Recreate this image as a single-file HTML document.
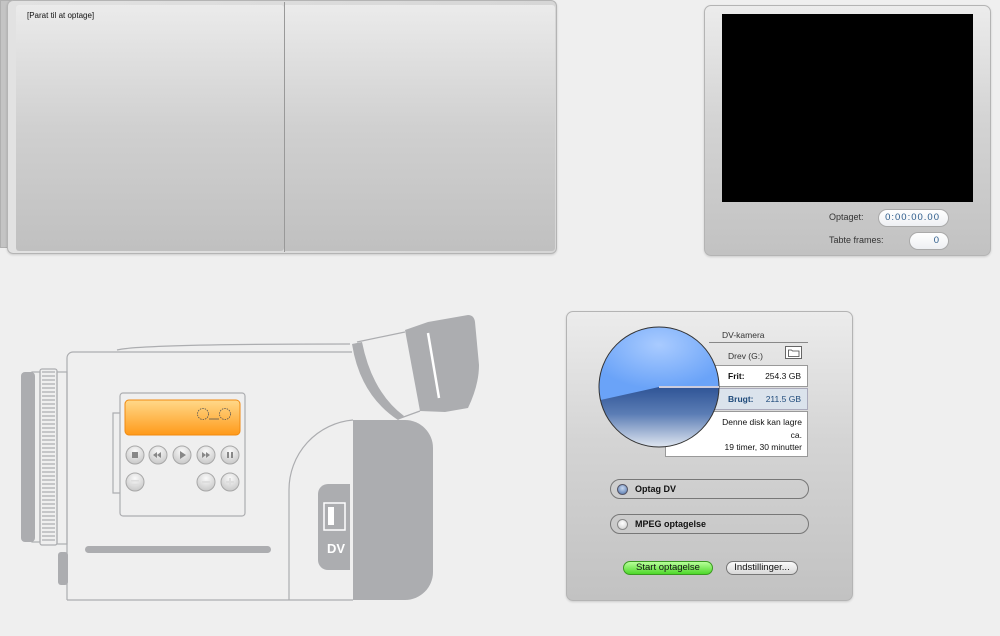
<!DOCTYPE html>
<html><head><meta charset="utf-8"><style>
*{margin:0;padding:0;box-sizing:border-box}
body{width:1000px;height:636px;overflow:hidden;background:#efefef;font-family:"Liberation Sans",sans-serif;position:relative}
.abs{position:absolute}
.panel{border:1px solid #b4b4b4;border-radius:7px;background:linear-gradient(#ececec,#d4d4d4 45%,#c2c2c2);box-shadow:0 1px 2px rgba(0,0,0,.15)}
.lbl{font-size:9px;color:#333}
.pill{position:absolute;background:linear-gradient(#fff,#eef0f3);border:1px solid #aaa;border-radius:10px;font-size:9.5px;color:#2a5a8a;text-align:right;padding-right:8px;letter-spacing:1px}
.radio{position:absolute;left:610px;width:199px;height:20px;border:1px solid #777;border-radius:10px;font-size:9px;font-weight:bold;color:#111;padding-left:24px;line-height:18px}
.radio i{position:absolute;left:6px;top:4px;width:11px;height:11px;border-radius:50%}
.btn{position:absolute;height:14px;border-radius:7px;font-size:9.5px;text-align:center;line-height:12px;color:#111}
</style></head><body>

<div class="abs" style="left:0;top:0;width:12px;height:248px;background:#c4c4c4;border:1px solid #b0b0b0"></div>
<div class="abs panel" style="left:7px;top:0;width:550px;height:254px;border-radius:6px;background:linear-gradient(90deg,#e2e2e2,#d6d6d6)"></div>
<div class="abs" style="left:16px;top:5px;width:268px;height:246px;background:linear-gradient(#ebebeb,#d0d0d0 50%,#c0c0c0);border-radius:3px"></div>
<div class="abs" style="left:284px;top:2px;width:1px;height:250px;background:#999"></div>
<div class="abs" style="left:285px;top:5px;width:270px;height:246px;background:linear-gradient(#ebebeb,#d0d0d0 50%,#c0c0c0);border-radius:0 3px 3px 0"></div>
<div class="abs lbl" style="left:27px;top:11px;font-size:8px;color:#111">[Parat til at optage]</div>

<div class="abs panel" style="left:704px;top:5px;width:287px;height:251px"></div>
<div class="abs" style="left:722px;top:14px;width:251px;height:188px;background:#000"></div>
<div class="abs lbl" style="left:829px;top:212px">Optaget:</div>
<div class="pill" style="left:878px;top:209px;width:71px;height:18px;line-height:16px">0:00:00.00</div>
<div class="abs lbl" style="left:829px;top:235px">Tabte frames:</div>
<div class="pill" style="left:909px;top:232px;width:40px;height:18px;line-height:16px">0</div>

<svg class="abs" style="left:0;top:300px" width="500" height="320" viewBox="0 300 500 320">
 <g fill="#acadb0">
  <rect x="21" y="372" width="14" height="170" rx="4"/>
  <rect x="58" y="552" width="10" height="33" rx="3"/>
  <rect x="85" y="546" width="186" height="7" rx="3.5"/>
  <path d="M353 420 H405 a28 28 0 0 1 28 28 V572 a28 28 0 0 1 -28 28 H353Z"/>
  <path d="M350 484 H328 a10 10 0 0 0 -10 10 V560 a10 10 0 0 0 10 10 H350Z"/>
  <path d="M405 330 L428 322 L468 315 Q474 315 475 322 L479 365 Q479 385 468 408 L445 412 L420 411 Z"/>
  <path d="M352 344 Q360 395 398 420 L404 416 Q372 392 362 342Z"/>
 </g>
 <g fill="none" stroke="#acadb0" stroke-width="1.2">
  <rect x="32" y="372" width="8" height="170"/>
  <rect x="40" y="369" width="17" height="176" rx="2"/>
  <rect x="57" y="372" width="10" height="172"/>
  <path d="M67 600 V358 a6 6 0 0 1 6 -6 H352"/>
  <path d="M117 350 Q140 344 350 344"/>
  <path d="M67 600 H353"/>
  <path d="M289 600 V490 a70 70 0 0 1 64 -70"/>
  <path d="M357 342 L405 332 M398 419 L420 411"/>
  <rect x="120" y="393" width="125" height="123" rx="3"/>
  <path d="M120 413 H113 V493 H120"/>
 </g>
 <g stroke="#acadb0" stroke-width="1.3">
  <path d="M42 372 H55 M42 376 H55 M42 380 H55 M42 384 H55 M42 388 H55 M42 392 H55 M42 396 H55 M42 400 H55 M42 404 H55 M42 408 H55 M42 412 H55 M42 416 H55 M42 420 H55 M42 424 H55 M42 428 H55 M42 432 H55 M42 436 H55 M42 440 H55 M42 444 H55 M42 448 H55 M42 452 H55 M42 456 H55 M42 460 H55 M42 464 H55 M42 468 H55 M42 472 H55 M42 476 H55 M42 480 H55 M42 484 H55 M42 488 H55 M42 492 H55 M42 496 H55 M42 500 H55 M42 504 H55 M42 508 H55 M42 512 H55 M42 516 H55 M42 520 H55 M42 524 H55 M42 528 H55 M42 532 H55 M42 536 H55 M42 540 H55"/>
 </g>
 <path d="M428 333 L439 398" stroke="#fff" stroke-width="2.5"/>
 <defs><linearGradient id="or" x1="0" y1="0" x2="0" y2="1"><stop offset="0" stop-color="#ffd98a"/><stop offset="1" stop-color="#ff9a1a"/></linearGradient>
 <radialGradient id="bt" cx=".5" cy=".3" r=".7"><stop offset="0" stop-color="#fafafa"/><stop offset="1" stop-color="#c8c8c8"/></radialGradient></defs>
 <rect x="125" y="400" width="115" height="35" rx="4" fill="url(#or)" stroke="#f08a10"/>
 <g fill="none" stroke="#555" stroke-width=".8" stroke-dasharray="1.5 1">
  <circle cx="203" cy="414" r="5.5"/><circle cx="225" cy="414" r="5.5"/></g>
 <path d="M209 419 H219" stroke="#555" stroke-width=".8"/>
 <g fill="url(#bt)" stroke="#a8a8a8">
  <circle cx="135" cy="455" r="9"/><circle cx="158" cy="455" r="9"/><circle cx="182" cy="455" r="9"/><circle cx="206" cy="455" r="9"/><circle cx="230" cy="455" r="9"/>
  <circle cx="135" cy="482" r="9"/><circle cx="206" cy="482" r="9"/><circle cx="230" cy="482" r="9"/>
 </g>
 <g fill="#888">
  <rect x="132" y="452" width="6" height="6"/>
  <path d="M153 455 l4 -3 v6z M157 455 l4 -3 v6z"/>
  <path d="M180 451 l6 4 l-6 4z"/>
  <path d="M202 452 l4 3 l-4 3z M206 452 l4 3 l-4 3z"/>
  <rect x="227" y="452" width="2" height="6"/><rect x="231" y="452" width="2" height="6"/>
 </g>
 <g fill="#ddd"><rect x="131" y="480" width="8" height="1.5"/><rect x="131" y="484" width="8" height="1.5"/><rect x="202" y="481" width="8" height="2"/><rect x="226" y="481" width="8" height="2"/><rect x="229" y="478" width="2" height="8"/></g>
 <rect x="324" y="503" width="21" height="27" fill="none" stroke="#fff" stroke-width="1.5"/>
 <rect x="328" y="507" width="6" height="18" fill="#fff"/>
 <text x="336" y="553" font-family="Liberation Sans" font-weight="bold" font-size="13" fill="#fff" text-anchor="middle">DV</text>
</svg>

<div class="abs panel" style="left:566px;top:311px;width:287px;height:290px"></div>
<div class="abs lbl" style="left:722px;top:330px;font-size:8.5px">DV-kamera</div>
<div class="abs" style="left:709px;top:342px;width:99px;height:1px;background:#888"></div>
<div class="abs lbl" style="left:728px;top:351px;font-size:8.5px">Drev (G:)</div>
<div class="abs" style="left:785px;top:346px;width:17px;height:13px;border:1px solid #666;background:#fff"></div>
<svg class="abs" style="left:788px;top:349px" width="12" height="8"><path d="M.5 7.5 V1 h3 l1 1 h6.5 v5.5z" fill="none" stroke="#444" stroke-width=".8"/></svg>
<div class="abs" style="left:700px;top:365px;width:108px;height:22px;background:#fff;border:1px solid #999"></div>
<div class="abs" style="left:700px;top:388px;width:108px;height:22px;background:#dbe3ec;border:1px solid #aab"></div>
<div class="abs" style="left:665px;top:411px;width:143px;height:46px;background:#fff;border:1px solid #999"></div>
<svg class="abs" style="left:596px;top:324px" width="130" height="126">
 <defs><linearGradient id="dk" x1="0" y1="0.5" x2="0" y2="1"><stop offset="0" stop-color="#2f5496"/><stop offset=".45" stop-color="#5b7db5"/><stop offset="1" stop-color="#dfe6f0"/></linearGradient>
 <radialGradient id="lt" cx=".5" cy=".25" r=".6"><stop offset="0" stop-color="#a9cbff"/><stop offset="1" stop-color="#6aa3f8"/></radialGradient></defs>
 <circle cx="63" cy="63" r="60" fill="url(#dk)"/>
 <path d="M63 63 L4.5 76 A60 60 0 1 1 123 63 Z" fill="url(#lt)"/>
 <circle cx="63" cy="63" r="60" fill="none" stroke="#333" stroke-width="1"/>
 <path d="M63 63 H123" stroke="#fff" stroke-width="2"/>
</svg>
<div class="abs" style="left:659px;top:386px;width:60px;height:2px;background:#ccd"></div>
<div class="abs" style="left:728px;top:371px;font-size:8.5px;font-weight:bold;color:#111">Frit:</div>
<div class="abs" style="left:741px;top:371px;width:60px;text-align:right;font-size:8.5px;color:#111">254.3 GB</div>
<div class="abs" style="left:728px;top:394px;font-size:8.5px;font-weight:bold;color:#1e4a7a">Brugt:</div>
<div class="abs" style="left:741px;top:394px;width:60px;text-align:right;font-size:8.5px;color:#1e4a7a">211.5 GB</div>
<div class="abs" style="left:670px;top:416px;width:132px;text-align:right;font-size:8.5px;color:#111;line-height:12.5px">Denne disk kan lagre<br>ca.<br>19 timer, 30 minutter</div>

<div class="radio" style="top:479px"><i style="background:radial-gradient(circle at 50% 35%,#c8d8f0,#4a6fa8);border:1px solid #556"></i>Optag DV</div>
<div class="radio" style="top:514px"><i style="background:radial-gradient(circle at 50% 35%,#fff,#ccc);border:1px solid #888"></i>MPEG optagelse</div>
<div class="btn" style="left:623px;top:561px;width:90px;background:linear-gradient(#b8ff9a,#4ed82a);border:1px solid #3a9a20">Start optagelse</div>
<div class="btn" style="left:726px;top:561px;width:72px;background:linear-gradient(#fafafa,#d8d8d8);border:1px solid #777">Indstillinger...</div>
</body></html>
